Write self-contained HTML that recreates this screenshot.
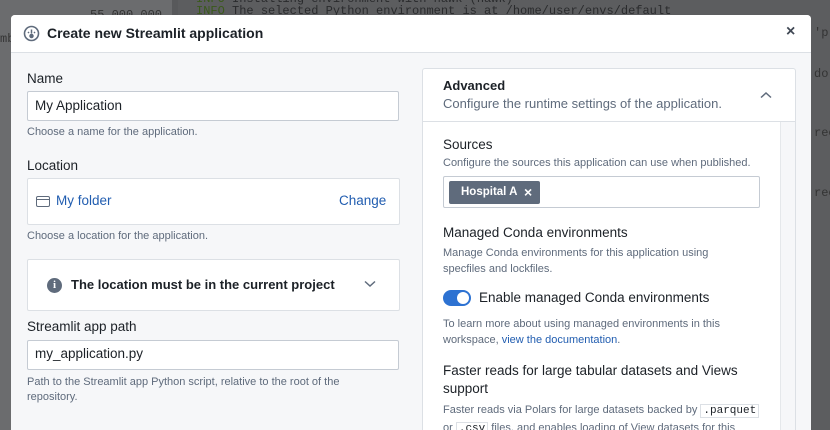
<!DOCTYPE html>
<html><head><style>
*{box-sizing:border-box;margin:0;padding:0}
html,body{width:830px;height:430px;overflow:hidden}
body{background:#6b6c6e;font-family:"Liberation Sans",sans-serif;position:relative;color:#1c2127}
.a{position:absolute;white-space:nowrap}
.code{font-family:"Liberation Mono",monospace;font-size:12px;color:#2a2b2d}
.lbl{font-size:13.5px;color:#1c2127}
.help{font-size:11px;color:#5f6b7c}
.inp{position:absolute;background:#fff;border:1px solid #c5cbd3;border-radius:2px}
</style></head><body>
<div class="a" style="left:178px;top:0;width:652px;height:430px;background:#5c5d5f"></div>
<div class="a" style="left:172px;top:0;width:6px;height:430px;background:#58595b"></div>
<div class="a code" style="left:196px;top:-8px"><span style="color:#3a5a1a">INFO</span> Installing environment with hawk (hawk)</div>
<div class="a code" style="left:196px;top:4px"><span style="color:#3a5a1a">INFO</span> The selected Python environment is at /home/user/envs/default</div>
<div class="a code" style="left:90px;top:8px;color:#333">55,000,000</div>
<div class="a code" style="left:0;top:32px;color:#333">mb</div>
<div class="a code" style="left:814px;top:26px;color:#333">'p</div>
<div class="a code" style="left:814px;top:67px;color:#333">do</div>
<div class="a code" style="left:814px;top:126px;color:#333">rect</div>
<div class="a code" style="left:814px;top:186px;color:#333">rect</div>

<div class="a" style="left:11px;top:15px;width:800px;height:415px;background:#f6f7f9;border-radius:4px 4px 0 0;overflow:hidden">
 <div class="a" style="left:0;top:0;width:800px;height:38px;background:#fff;border-bottom:1px solid #dce0e5"></div>
 <svg class="a" style="left:12px;top:10px" width="17" height="17" viewBox="0 0 17 17"><circle cx="8.5" cy="8.5" r="7" fill="none" stroke="#5f6b7c" stroke-width="1.6"/><path d="M8.5 4.5v4M5 7l1 1M12 7l-1 1M8.5 9.5a1.5 1.5 0 1 0 0.01 0" stroke="#5f6b7c" stroke-width="1.5" fill="#5f6b7c"/></svg>
 <div class="a" style="left:36px;top:10px;font-size:14px;font-weight:bold;color:#1c2127">Create new Streamlit application</div>
 <div class="a" style="left:775px;top:8px;font-size:16px;font-weight:bold;color:#404854">×</div>

 <div class="a lbl" style="left:16px;top:56px">Name</div>
 <div class="inp" style="left:16px;top:76px;width:372px;height:30px"></div>
 <div class="a" style="left:24px;top:83px;font-size:13.5px">My Application</div>
 <div class="a help" style="left:16px;top:111px">Choose a name for the application.</div>

 <div class="a lbl" style="left:16px;top:143px">Location</div>
 <div class="inp" style="left:16px;top:163px;width:373px;height:47px;border-color:#dce0e5"></div>
 <div class="a" style="left:25px;top:181px;width:14px;height:11px;border:1.3px solid #5f6b7c;border-radius:2px"><div style="position:absolute;left:0;right:0;top:2px;border-top:1.3px solid #5f6b7c"></div></div>
 <div class="a" style="left:45px;top:178px;font-size:13.5px;color:#215db0">My folder</div>
 <div class="a" style="left:328px;top:178px;font-size:13.5px;color:#215db0">Change</div>
 <div class="a help" style="left:16px;top:215px">Choose a location for the application.</div>

 <div class="inp" style="left:16px;top:244px;width:373px;height:52px;border-color:#dce0e5"></div>
 <div class="a" style="left:36px;top:263px;width:15px;height:15px;border-radius:50%;background:#5f6b7c;color:#fff;font-size:11px;font-weight:bold;text-align:center;line-height:15px;font-family:'Liberation Serif',serif">i</div>
 <div class="a" style="left:60px;top:262px;font-size:13px;font-weight:bold">The location must be in the current project</div>
 <svg class="a" style="left:353px;top:265px" width="12" height="8"><path d="M1 1.5l5 4.5 5-4.5" stroke="#5f6b7c" stroke-width="1.5" fill="none"/></svg>

 <div class="a lbl" style="left:16px;top:304px">Streamlit app path</div>
 <div class="inp" style="left:16px;top:325px;width:372px;height:30px"></div>
 <div class="a" style="left:24px;top:331px;font-size:13.5px">my_application.py</div>
 <div class="a help" style="left:16px;top:360px;line-height:15px">Path to the Streamlit app Python script, relative to the root of the<br>repository.</div>

 <div class="a" style="left:411px;top:53px;width:374px;height:400px;background:#fff;border:1px solid #dce0e5;border-radius:3px"></div>
 <div class="a" style="left:412px;top:106px;width:372px;border-top:1px solid #dce0e5"></div>
 <div class="a" style="left:432px;top:63px;font-size:13px;font-weight:bold">Advanced</div>
 <div class="a" style="left:432px;top:81px;font-size:13px;color:#5f6b7c">Configure the runtime settings of the application.</div>
 <svg class="a" style="left:749px;top:76px" width="12" height="8"><path d="M1 6.5l5-4.5 5 4.5" stroke="#5f6b7c" stroke-width="1.5" fill="none"/></svg>
 <div class="a" style="left:769px;top:107px;width:15px;height:330px;background:#f6f7f9;border-left:1px solid #e5e8eb"></div>

 <div class="a lbl" style="left:432px;top:122px">Sources</div>
 <div class="a help" style="left:432px;top:142px">Configure the sources this application can use when published.</div>
 <div class="inp" style="left:432px;top:161px;width:317px;height:32px"></div>
 <div class="a" style="left:438px;top:166px;width:91px;height:23px;background:#5f6b7c;border-radius:2px;color:#fff;font-size:11.5px;font-weight:bold;line-height:23px;padding-left:12px">Hospital A<span style="position:absolute;left:75px;font-size:14px">×</span></div>

 <div class="a lbl" style="left:432px;top:210px">Managed Conda environments</div>
 <div class="a help" style="left:432px;top:230px;line-height:16px">Manage Conda environments for this application using<br>specfiles and lockfiles.</div>
 <div class="a" style="left:432px;top:275px;width:28px;height:16px;border-radius:8px;background:#2d72d2"><div style="position:absolute;right:2px;top:2px;width:12px;height:12px;border-radius:50%;background:#fff"></div></div>
 <div class="a lbl" style="left:468px;top:275px">Enable managed Conda environments</div>
 <div class="a help" style="left:432px;top:301px;line-height:16px">To learn more about using managed environments in this<br>workspace, <span style="color:#215db0">view the documentation</span>.</div>
 <div class="a lbl" style="left:432px;top:347px;line-height:18px">Faster reads for large tabular datasets and Views<br>support</div>
 <div class="a help" style="left:432px;top:387px;line-height:17px">Faster reads via Polars for large datasets backed by <span style="font-family:'Liberation Mono',monospace;border:1px solid #dce0e5;padding:0 2px;color:#1c2127">.parquet</span><br>or <span style="font-family:'Liberation Mono',monospace;border:1px solid #dce0e5;padding:0 2px;color:#1c2127">.csv</span> files, and enables loading of View datasets for this</div>
</div>
</body></html>
